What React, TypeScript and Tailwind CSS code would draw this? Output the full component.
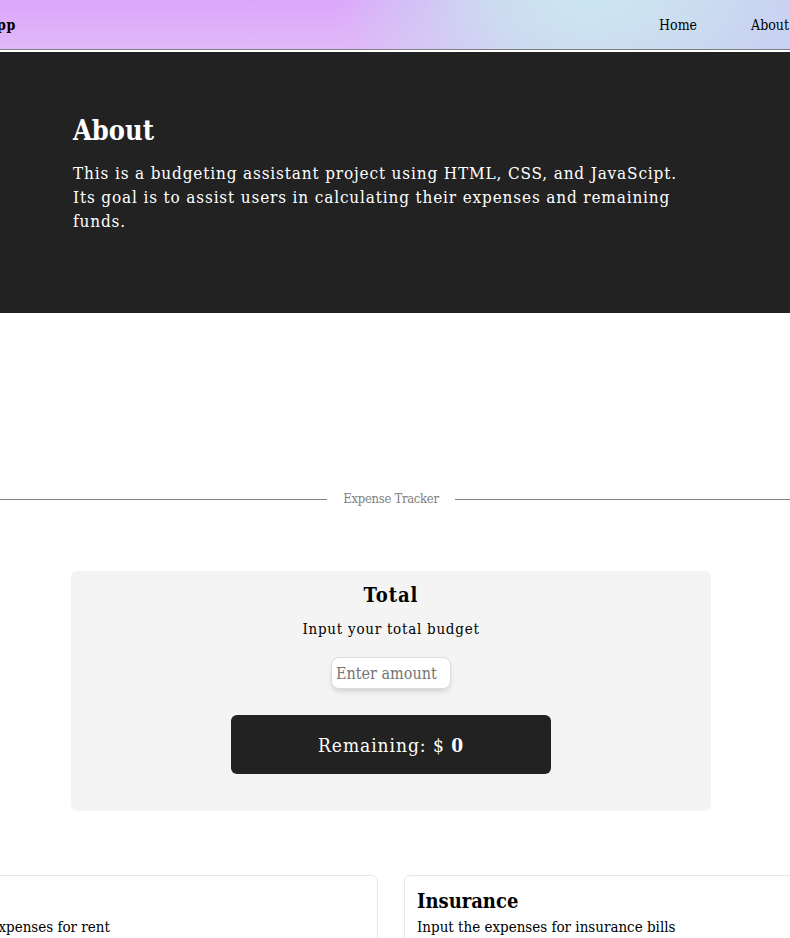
import React from "react";

const expenses = [
  { id: "rent", title: "Rent", hint: "Input the expenses for rent" },
  { id: "insurance", title: "Insurance", hint: "Input the expenses for insurance bills" },
];

function Header() {
  return (
    <header className="flex h-[50px] items-center justify-between border-b border-[#808080] bg-[radial-gradient(ellipse_260px_130px_at_680px_0px,#cce6f0_0%,#cce2f0d0_35%,#ccdef160_65%,transparent_100%),linear-gradient(to_right,transparent_46%,#c8cff1_70%),linear-gradient(to_bottom,#dca6fb,#e1b8f8)] pl-4">
      <a href="#home" className="pt-px text-sm leading-6 font-bold tracking-wider">
        Budget App
      </a>
      <nav className="flex gap-[54px] pr-[83px] text-sm leading-6">
        <a href="#home">Home</a>
        <a href="#about">About</a>
      </nav>
    </header>
  );
}

function About() {
  return (
    <section id="about" className="mt-0.5 bg-[#222222] pt-[61px] pb-20 text-white">
      <div className="mx-auto w-full max-w-[636px] pr-5">
        <h1 className="text-[27px] leading-9 font-bold">About</h1>
        <p className="mt-3 text-[17px] leading-6 tracking-wider">
          This is a budgeting assistant project using HTML, CSS, and JavaScipt. Its goal is to assist users in
          calculating their expenses and remaining funds.
        </p>
      </div>
    </section>
  );
}

function Divider() {
  return (
    <div className="mt-[174px] flex items-center gap-4 text-[13px] leading-6 text-[#808080]">
      <span className="h-px flex-1 bg-[#808080]" />
      <h2 className="tracking-tight">Expense Tracker</h2>
      <span className="h-px flex-1 bg-[#808080]" />
    </div>
  );
}

function Total() {
  return (
    <section className="mx-auto mt-[60px] flex w-full max-w-[640px] flex-col items-center rounded-md bg-[#f4f4f4] pt-3 pb-[37px]">
      <h2 className="text-xl leading-6 font-bold tracking-wider">Total</h2>
      <label htmlFor="budget" className="mt-2.5 text-[15px] leading-6 tracking-wider">
        Input your total budget
      </label>
      <input
        id="budget"
        type="text"
        inputMode="decimal"
        placeholder="Enter amount"
        className="mt-4 h-8 w-[120px] rounded-lg border border-[#dddddd] bg-white px-1 text-base leading-6 shadow-md outline-none placeholder:text-[#757575]"
      />
      <p className="mt-[26px] w-1/2 rounded-md bg-[#222222] pt-[18px] pb-[17px] text-center text-[19px] leading-6 tracking-wider text-white">
        Remaining: $ <strong>0</strong>
      </p>
    </section>
  );
}

function Expenses() {
  return (
    <section className="mt-16 grid grid-cols-2 gap-[26px]">
      {expenses.map((expense) => (
        <article key={expense.id} className="rounded-md border border-[#e8e8e8] px-3 pt-[13px] pb-6">
          <h3 className="text-xl leading-6 font-bold">{expense.title}</h3>
          <p className="mt-0.5 text-[15px] leading-6">{expense.hint}</p>
        </article>
      ))}
    </section>
  );
}

export default function App() {
  return (
    <div className="h-screen overflow-hidden bg-white font-['DejaVu_Serif_Condensed','DejaVu_Serif',serif] text-black">
      <div className="-mr-[82px] -ml-[90px]">
        <Header />
        <main>
          <About />
          <Divider />
          <Total />
          <Expenses />
        </main>
      </div>
    </div>
  );
}
